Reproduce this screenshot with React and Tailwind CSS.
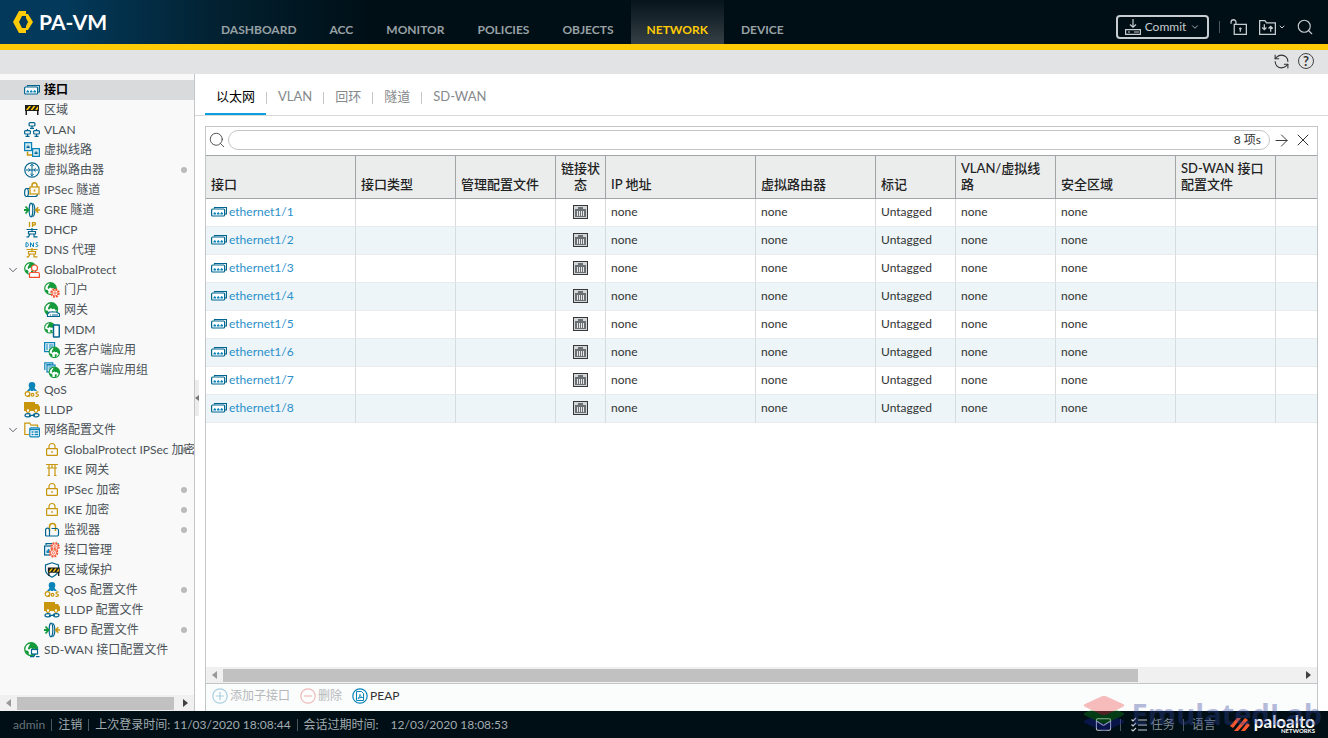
import React, { useState } from 'react';
import { ArrowRight, ChevronDown, ChevronRight, Search, X, Mail, RefreshCcw } from 'lucide-react';

const TEAL = '#00668f';
const BLUE = '#0a84b8';
const GOLD = '#c8960c';
const GREEN = '#149a3a';
const RED = '#f2502c';

const Icon = ({ children, className = 'size-4' }) => (
    <svg viewBox="0 0 16 16" fill="none" strokeWidth="1.2" className={`${className} shrink-0`} aria-hidden="true">
        {children}
    </svg>
);

/* --- Shared shapes --- */
const Globe = ({ x = 0, y = 0, s = 1 }) => (
    <g transform={`translate(${x} ${y}) scale(${s})`}>
        <circle cx="6.500" cy="6.500" r="5.800" fill="#fff" stroke={GREEN} />
        <path d="M6 1h3l2.500 2.500.8 3-1.500 1.500-1.500-2-1.500.5-1.500-1L4.500 7 3.500 6l.8-2Z" fill={GREEN} />
        <path d="M1 7.500 3.500 8l1 1.500-.5 2.300L2 10ZM7 8.500l2.500.5-1 2.500-1.500.5Z" fill={GREEN} />
    </g>
);

const Port = () => (
    <>
        <path d="M3.500 4.500v-1h12v6.500h-1.500" stroke={TEAL} />
        <rect x=".6" y="5" width="13" height="7" rx="1" stroke={TEAL} fill="#fff" />
        <path d="M2.500 10.500V9h.8V8h1v1h.8v1.500ZM6 10.500V9h.7V8h1v1h.8v1.500ZM9.400 10.500V9h.8V8h1v1h.8v1.500Z" fill={BLUE} />
    </>
);

const Barrier = () => (
    <>
        <path d="M1 3h14v6H1zM1.500 9H3v4H1.500zM13 9h1.500v4H13z" fill="#1c1c1c" />
        <path d="M2 8 5 4h2L4 8ZM6.500 8l3-4h2l-3 4ZM11 8l3-4v3l-1 1Z" fill="#ffcb06" />
    </>
);

const Lock = () => (
    <>
        <rect x="2.600" y="6.600" width="10.800" height="6.800" rx=".6" stroke={GOLD} />
        <path d="M5 6.500V4.500a3 3 0 0 1 6 0v2M8 9v2" stroke={GOLD} />
    </>
);

const Tunnel = () => (
    <>
        <ellipse cx="7" cy="8" rx="1.800" ry="6.800" stroke={TEAL} />
        <path d="M8.500 1.300c1.700.8 2.300 4 2.300 6.700s-.6 5.900-2.300 6.700" stroke={TEAL} />
        <path d="M0 8h4M1.500 4.500 4.600 8l-3.100 3.500" stroke={GREEN} strokeWidth="1.800" />
        <path d="M16 8h-4M14.300 5.200 11.700 8l2.600 2.800" stroke={GOLD} strokeWidth="1.500" />
    </>
);

const Figure = ({ color }) => (
    <path d="M2.500 7.500h11M8 6v4M4.500 9.500h7v2.500h-7zM6 12l-1.500 2.800h-2M10 12v2.800h3.500" stroke={color} />
);

const Gear = ({ x, y }) => (
    <g transform={`translate(${x} ${y})`}>
        <circle r="4" stroke={RED} strokeWidth="1.500" strokeDasharray="1.900 1.240" fill="#fff" />
        <circle r="3" stroke={RED} strokeWidth=".9" />
        <circle r="1.200" stroke={RED} strokeWidth=".8" />
    </g>
);

const Qos = () => (
    <>
        <path d="M8 0a3.300 3.300 0 0 1 3.300 3.300c0 1.500-.5 2-.8 2.700l2.500 3h-2.500L9.500 7.500V9h-3V7.500L5.500 9H3l2.500-3c-.3-.7-.8-1.200-.8-2.700A3.300 3.300 0 0 1 8 0Z" fill={BLUE} />
        <circle cx="3.500" cy="12" r="2.300" stroke={GOLD} />
        <path d="M4 13l1.500 2" stroke={GOLD} />
        <circle cx="8.500" cy="12.800" r="1.400" stroke={GOLD} />
        <path d="M14.500 10.300c-2-1-3.200.6-1.900 1.500 1.800.8 2.200 1.300 1.600 2-.7.800-1.800.600-2.700.100" stroke={GOLD} />
    </>
);

const Lldp = () => (
    <>
        <path d="M0 0h11v2h3l2 3v4H0Z" fill={GOLD} />
        <circle cx="4" cy="8.500" r="1.800" fill="#fff" stroke={GOLD} />
        <circle cx="12" cy="8.500" r="1.800" fill="#fff" stroke={GOLD} />
        <path d="M0 11h16v5H0z" fill="#f9f9f9" />
        <path d="M6.500 12.300c-1.200-1-5.500-1-5.500 1s4.300 2.200 5.800.5M9.500 14.300c1.200 1 5.500 1 5.500-1s-4.300-2.200-5.800-.5M5 13.300h6" stroke={TEAL} strokeWidth="1.300" />
    </>
);

const ICONS = {
    port: <Port />,
    barrier: <Barrier />,
    vlan: (
        <>
            <rect x="5.100" y=".6" width="5.800" height="3.400" rx="1" stroke={TEAL} />
            <rect x=".6" y="8.600" width="5.800" height="3.400" rx="1" stroke={TEAL} />
            <rect x="9.600" y="8.600" width="5.800" height="3.400" rx="1" stroke={TEAL} />
            <path d="M8 4v2.400M6 6.400h4M3.500 12v2.400M1.500 14.400h4M12.500 12v2.400M10.500 14.400h4M3.500 8.500V7M12.500 8.500V7" stroke={TEAL} />
        </>
    ),
    wire: (
        <>
            <path d="M3.500 9.500v3.500h5" stroke={GOLD} strokeWidth="1.500" />
            <rect x=".6" y=".6" width="7" height="8" stroke={BLUE} fill="#cde6f2" />
            <rect x="8.600" y="6.600" width="6.800" height="7.800" stroke={BLUE} fill="#cde6f2" />
            <path d="M2.500 6V4.500h1V3.500h1.200v1h1V6ZM10.500 12v-1.500h1v-1h1.200v1h1V12Z" fill={TEAL} />
        </>
    ),
    router: (
        <>
            <circle cx="8" cy="8" r="7.200" stroke={TEAL} />
            <path d="M8 2v12M2 8h12M6.300 4 8 2.300 9.700 4M6.300 12 8 13.700 9.700 12M4.500 6.300 6.200 8 4.500 9.700M11.500 6.300 9.800 8l1.700 1.700" stroke={TEAL} strokeWidth="1" />
        </>
    ),
    ipsec: (
        <>
            <path d="M2.500 6.500H6M2.500 14.500H11c2 0 2.500-1 2.500-2.500" stroke={TEAL} />
            <ellipse cx="2.500" cy="10.500" rx="1.900" ry="4" stroke={TEAL} />
            <rect x="6" y="5" width="9" height="7" stroke={GOLD} fill="#fdf9ec" />
            <path d="M8 5V3.300a2.500 2.500 0 0 1 5 0V5M10.500 7.500v2" stroke={GOLD} strokeWidth="1.500" />
        </>
    ),
    tunnel: <Tunnel />,
    dhcp: (
        <>
            <path d="M5.500 0v5M8.500 5V.6h1.800a1 1 0 0 1 0 2.400H8.500" stroke={GOLD} strokeWidth="1.300" />
            <Figure color={TEAL} />
        </>
    ),
    dns: (
        <>
            <path d="M2 .6v4.300c3.200 0 3.200-4.300 0-4.300ZM6.500 5V.6L9.500 5V.6M14 .8c-2.600-.8-2.600 1.600-1.200 1.900 2 .4 1.500 2.500-1.100 1.900" stroke={BLUE} strokeWidth="1" />
            <Figure color={GOLD} />
        </>
    ),
    globeUser: (
        <>
            <Globe />
            <circle cx="10.500" cy="6" r="3" fill="#fff" stroke={RED} />
            <path d="M5.500 15.400V12a1.500 1.500 0 0 1 1.500-1.500h7a1.500 1.500 0 0 1 1.400 1.500v3.400Z" fill="#fff" stroke={RED} />
        </>
    ),
    globeGear: (<><Globe /><Gear x={11} y={11} /></>),
    globeServer: (
        <>
            <Globe s={1.1} />
            <path d="M3.500 14.500v-2.500l2-2h7l3 2v2.500Z" fill="#fff" stroke={TEAL} />
            <path d="M6 13h1M8 13h6" stroke={TEAL} />
        </>
    ),
    globePhone: (
        <>
            <Globe s={0.9} />
            <rect x="9.500" y="3" width="5.800" height="12" rx=".5" fill="#fff" stroke={TEAL} strokeWidth="1.500" />
        </>
    ),
    listGlobe: (
        <>
            <rect x=".6" y=".6" width="10" height="9" fill="#e3f1f8" stroke={BLUE} />
            <path d="M2 3h2M5 3h4.500M2 5h2M5 5h4.500M2 7h2M5 7h3" stroke={BLUE} strokeWidth="1" />
            <Globe x={4.5} y={4.5} s={0.9} />
        </>
    ),
    listsGlobe: (
        <>
            <path d="M.8 8V.8h8V3" stroke={BLUE} />
            <rect x="3" y="3" width="8" height="7" fill="#e3f1f8" stroke={BLUE} />
            <path d="M2.500 2.500h5M4.500 5h5M4.500 7h4" stroke={BLUE} strokeWidth="1" />
            <Globe x={4.5} y={4.5} s={0.9} />
        </>
    ),
    qos: <Qos />,
    lldp: <Lldp />,
    folder: (
        <>
            <path d="M5 12.500H.8V1.200h5L7 3.200h6.500V5" stroke={GOLD} />
            <rect x="5.800" y="5.800" width="9.600" height="9" rx="1" fill="#fff" stroke={BLUE} />
            <path d="M6 7.500h9M7.500 10h2M10.500 10H14M7.500 12.500h2M10.500 12.500H14" stroke={BLUE} strokeWidth="1.300" />
        </>
    ),
    lock: <Lock />,
    gate: <path d="M2 2.500h12M3 6h10M5 2.500v11M11 2.500v11M8 2.500V6M3.500 13.500h2.500M10 13.500h2.500" stroke={GOLD} />,
    monitor: (
        <>
            <path d="M5.500 9V4.500a3 3 0 0 1 6 0V9" stroke={GOLD} strokeWidth="1.500" />
            <path d="M1.600 14V8a1.900 1.900 0 0 1 3.900 0v6M1.600 14h11.700c.8 0 1.200-.5 1.200-1.200V8.500a2 2 0 0 0-2-2H7.500" stroke={TEAL} />
        </>
    ),
    portGear: (
        <>
            <path d="M2 3V1.600h12V6" stroke={TEAL} />
            <rect x=".6" y="4" width="10" height="9" fill="#e3f1f8" stroke={TEAL} />
            <path d="M2.500 11V8.500h1.300V7h1.500v1.500h1.200V11Z" fill={BLUE} />
            <Gear x={11} y={4.8} />
            <Gear x={9.5} y={10.8} />
        </>
    ),
    shield: (
        <>
            <path d="M8 .8 1.500 3v5c0 3.500 3 5.500 6.500 7.200 3.500-1.700 6.500-3.700 6.500-7.200V3Z" stroke={TEAL} />
            <g transform="translate(3 3) scale(.85)"><Barrier /></g>
        </>
    ),
    sdwan: (
        <>
            <Globe s={1.1} />
            <rect x="7.500" y="7.500" width="6" height="4.500" fill="#fff" stroke={TEAL} />
            <path d="M10.500 12v2.500M6 14.700h4M12 14.700h3.500" stroke={TEAL} />
        </>
    ),
};

const TREE = [
    { icon: 'port', label: '接口', active: true },
    { icon: 'barrier', label: '区域' },
    { icon: 'vlan', label: 'VLAN' },
    { icon: 'wire', label: '虚拟线路' },
    { icon: 'router', label: '虚拟路由器', dot: true },
    { icon: 'ipsec', label: 'IPSec 隧道' },
    { icon: 'tunnel', label: 'GRE 隧道' },
    { icon: 'dhcp', label: 'DHCP' },
    { icon: 'dns', label: 'DNS 代理' },
    {
        icon: 'globeUser', label: 'GlobalProtect', children: [
            { icon: 'globeGear', label: '门户' },
            { icon: 'globeServer', label: '网关' },
            { icon: 'globePhone', label: 'MDM' },
            { icon: 'listGlobe', label: '无客户端应用' },
            { icon: 'listsGlobe', label: '无客户端应用组' },
        ],
    },
    { icon: 'qos', label: 'QoS' },
    { icon: 'lldp', label: 'LLDP' },
    {
        icon: 'folder', label: '网络配置文件', children: [
            { icon: 'lock', label: 'GlobalProtect IPSec 加密', dot: true },
            { icon: 'gate', label: 'IKE 网关' },
            { icon: 'lock', label: 'IPSec 加密', dot: true },
            { icon: 'lock', label: 'IKE 加密', dot: true },
            { icon: 'monitor', label: '监视器', dot: true },
            { icon: 'portGear', label: '接口管理' },
            { icon: 'shield', label: '区域保护' },
            { icon: 'qos', label: 'QoS 配置文件', dot: true },
            { icon: 'lldp', label: 'LLDP 配置文件' },
            { icon: 'tunnel', label: 'BFD 配置文件', dot: true },
        ],
    },
    { icon: 'sdwan', label: 'SD-WAN 接口配置文件' },
];

const NAV = ['DASHBOARD', 'ACC', 'MONITOR', 'POLICIES', 'OBJECTS', 'NETWORK', 'DEVICE'];
const TABS = ['以太网', 'VLAN', '回环', '隧道', 'SD-WAN'];

const COLUMNS = [
    { label: '接口', width: 'w-[150px]' },
    { label: '接口类型', width: 'w-[100px]' },
    { label: '管理配置文件', width: 'w-[100px]' },
    { label: '链接状态', width: 'w-[50px]', center: true },
    { label: 'IP 地址', width: 'w-[150px]' },
    { label: '虚拟路由器', width: 'w-[120px]' },
    { label: '标记', width: 'w-[80px]' },
    { label: 'VLAN/虚拟线路', width: 'w-[100px]' },
    { label: '安全区域', width: 'w-[120px]' },
    { label: 'SD-WAN 接口配置文件', width: 'w-[100px]' },
    { label: '', width: '' },
];

const INTERFACES = [1, 2, 3, 4, 5, 6, 7, 8].map(n => ({
    name: `ethernet1/${n}`, ip: 'none', router: 'none', tag: 'Untagged', vlan: 'none', zone: 'none',
}));

const TreeItem = ({ item, nested }) => {
    const [open, setOpen] = useState(true);
    return (
        <li>
            <div className={`relative flex h-5 items-center ${nested ? 'pl-11' : ''} ${item.active ? 'bg-[#d9dadb]' : ''}`}>
                {!nested && (
                    <span className="flex w-6 shrink-0 items-center pl-1.5">
                        {item.children && (
                            <button onClick={() => setOpen(!open)} aria-label={item.label}>
                                {open ? <ChevronDown size={14} strokeWidth={1.5} /> : <ChevronRight size={14} strokeWidth={1.5} />}
                            </button>
                        )}
                    </span>
                )}
                {item.dot && <span className="absolute right-[7px] size-1.5 rounded-full bg-[#b9babb]" />}
                <a href="#" className={`relative flex items-center gap-1 whitespace-nowrap ${item.active ? 'font-bold text-black' : ''}`}>
                    <Icon>{ICONS[item.icon]}</Icon>
                    {item.label}
                </a>
            </div>
            {item.children && open && (
                <ul>{item.children.map(child => <TreeItem key={child.label} item={child} nested />)}</ul>
            )}
        </li>
    );
};

const ScrollBar = ({ thumb }) => (
    <div className="flex h-4 shrink-0 items-center bg-[#f0f0f0] px-1.5">
        <span className="size-0 border-y-4 border-r-[5px] border-y-transparent border-r-[#999]" />
        <div className="mx-1.5 h-[13px] grow">
            <div className={`h-full bg-[#c1c1c1] ${thumb}`} />
        </div>
        <span className="size-0 border-y-4 border-l-[5px] border-y-transparent border-l-[#404040]" />
    </div>
);

const Header = () => (
    <header className="flex h-[50px] shrink-0 border-b-6 border-[#ffcb06] bg-[#000f16] bg-linear-to-r from-[#03395a] from-5% via-[#02202f] via-17% to-[#000f16] to-28%">
        <div className="flex w-[205px] shrink-0 items-center gap-1.5 pl-[13px] text-[21px] font-bold text-white">
            <svg width="20" height="22" viewBox="0 0 20 22" aria-hidden="true">
                <path d="M6 0h7v5H9L6 11l3 6h4v5H6L0 11ZM15 3l5 8-5 8h-2v-4l2-4-2-4V3Z" fill="#ffcb06" />
            </svg>
            PA-VM
        </div>
        <nav className="flex grow gap-px text-xs font-bold text-[#98a1a5]">
            {NAV.map(name => (
                <a
                    key={name}
                    href="#"
                    className={`flex items-center px-4 pt-4 ${name === 'NETWORK' ? 'bg-linear-to-b from-[#06141b] to-[#363f46] text-[#ffcb06]' : ''}`}
                >
                    {name}
                </a>
            ))}
        </nav>
        <div className="flex items-center gap-2.5 pt-2.5 pr-3.5 text-[#c6cccf]">
            <button className="flex h-6 w-[93px] items-center justify-center gap-1 rounded border-2 border-[#c6cccf] text-xs">
                <Icon>
                    <path d="M8 0v8M5 5.500 8 8.300l3-2.800M.6 10.600h14.800v4.800H.6zM3 13h2M9 13h5" stroke="currentColor" />
                </Icon>
                Commit
                <ChevronDown size={10} />
            </button>
            <span className="h-3 w-px bg-[#4c585e]" />
            <button aria-label="Locks">
                <Icon className="size-[17px]">
                    <path d="M1 4.500V3a2.300 2.300 0 0 1 4.600 0v2M4 5h11.400v9.400H4Z" stroke="currentColor" />
                    <path d="M9.700 8v4M8.500 9h2.500" stroke="currentColor" />
                </Icon>
            </button>
            <button aria-label="Config" className="ml-0.5 flex items-center gap-0.5">
                <Icon className="size-[17px]">
                    <path d="M.6 14.400V1.600h5l1.500 2h8.300v10.800ZM5 5v5M3 8l2 2 2-2M11 12V7M9 9l2-2 2 2" stroke="currentColor" />
                </Icon>
                <ChevronDown size={8} strokeWidth={3} />
            </button>
            <button aria-label="Search"><Search size={18} strokeWidth={1.5} /></button>
        </div>
    </header>
);

const Footer = () => (
    <footer className="flex h-[27px] shrink-0 items-center justify-between bg-[#000f16] px-[13px] text-xs text-[#a3abaf]">
        <div className="flex items-center gap-1.5">
            <span className="text-[#687379]">admin</span>
            <span className="h-3 w-px bg-[#4c585e]" />
            <a href="#">注销</a>
            <span className="h-3 w-px bg-[#4c585e]" />
            <span>上次登录时间: 11/03/2020 18:08:44</span>
            <span className="h-3 w-px bg-[#4c585e]" />
            <span>会话过期时间:</span>
            <span className="pl-1.5">12/03/2020 18:08:53</span>
        </div>
        <div className="flex items-center gap-2 text-[#7f898e]">
            <a href="#" aria-label="Mail" className="text-[#c6cccf]"><Mail size={17} strokeWidth={1.5} /></a>
            <span className="h-3 w-px bg-[#4c585e]" />
            <a href="#" className="flex items-center gap-1 pl-0.5">
                <Icon>
                    <path d="m.5 2.500 1.500 1.500L5 1M.5 7.500 2 9l3-3M.5 12.500 2 14l3-3M7 3h9M7 8h9M7 13h9" stroke="#c6cccf" />
                </Icon>
                任务
            </a>
            <span className="h-3 w-px bg-[#4c585e]" />
            <a href="#">语言</a>
            <div className="flex items-center gap-1 pl-1.5 text-white">
                <svg width="20" height="15" viewBox="0 0 20 15" fill="#fa582d" aria-hidden="true">
                    <path d="M0 9 7 1h4L3 11ZM4 14l11-13 3 2L8 14ZM11 14l6-8 3 2-5 6Z" />
                </svg>
                <div className="flex flex-col items-end">
                    <span className="text-[17px] leading-3 font-bold">paloalto</span>
                    <span className="text-[6px] leading-[6px] font-bold">NETWORKS</span>
                </div>
            </div>
        </div>
    </footer>
);

const Watermark = () => (
    <div className="pointer-events-none absolute right-1.5 bottom-1.5 flex items-center gap-1.5 opacity-35" aria-hidden="true">
        <svg width="44" height="36" viewBox="0 0 44 38">
            <path d="M1 26 22 17l21 9q1 2-2 3L26 36q-4 2-8 0L3 29q-3-1-2-3Z" fill="#1c1fa8" />
            <path d="M1 18 22 9l21 9q1 2-2 3L26 28q-4 2-8 0L3 21q-3-1-2-3Z" fill="#0a8f14" />
            <path d="M1 9 18 1q4-2 8 0l17 8q1 2-2 3L26 19q-4 2-8 0L3 12q-3-1-2-3Z" fill="#ee4444" />
        </svg>
        <span className="font-['Open_Sans',sans-serif] text-[29px] leading-8 font-bold text-[#33439b]">EmulatedLab</span>
    </div>
);

const InterfaceTable = () => (
    <table className="w-full table-fixed border-separate border-spacing-0 text-left">
        <thead>
            <tr className="h-11 bg-[#ebeded] text-[13px] leading-4 text-[#222]">
                {COLUMNS.map((col, i) => (
                    <th
                        key={i}
                        className={`${col.width} border-y border-r border-[#a0a5a8] px-[5px] pb-1.5 align-bottom font-medium last:border-r-0 ${col.center ? 'text-center' : ''}`}
                    >
                        {col.label}
                    </th>
                ))}
            </tr>
        </thead>
        <tbody>
            {INTERFACES.map(row => (
                <tr
                    key={row.name}
                    className="h-7 even:bg-[#edf5f8] [&>td]:border-r [&>td]:border-b [&>td]:border-r-[#d8dbdc] [&>td]:border-b-[#e8ebec] [&>td]:px-[5px] [&>td]:pb-0.5 [&>td:last-child]:border-r-0"
                >
                    <td>
                        <a href="#" className="flex items-center gap-0.5 text-[#2a8fc9]">
                            <Icon>{ICONS.port}</Icon>
                            {row.name}
                        </a>
                    </td>
                    <td />
                    <td />
                    <td>
                        <svg width="15" height="14" viewBox="0 0 15 14" className="mx-auto" role="img" aria-label="link">
                            <rect x=".5" y=".5" width="14" height="13" fill="#d4d6d8" stroke="#33373a" />
                            <path d="M2 12V4h3V2h5v2h3v8Z" fill="#6b7074" />
                            <path d="M4.500 6v5M6.500 6v5M8.500 6v5M10.500 6v5" stroke="#e8e8e8" />
                        </svg>
                    </td>
                    <td>{row.ip}</td>
                    <td>{row.router}</td>
                    <td>{row.tag}</td>
                    <td>{row.vlan}</td>
                    <td>{row.zone}</td>
                    <td />
                    <td />
                </tr>
            ))}
        </tbody>
    </table>
);

const App = () => {
    const [tab, setTab] = useState('以太网');
    const [query, setQuery] = useState('');

    return (
        <div className="relative flex h-screen flex-col overflow-hidden bg-white font-[Lato,'Noto_Sans_CJK_SC',sans-serif] text-xs text-[#333]">
            <Header />

            <div className="flex h-6 shrink-0 items-center justify-end gap-2 bg-[#e1e3e5] pr-3.5 pb-0.5 text-[#333]">
                <button aria-label="Refresh"><RefreshCcw size={17} strokeWidth={1.5} /></button>
                <button aria-label="Help" className="flex size-4 items-center justify-center rounded-full border border-[#444] text-[13px] leading-none font-bold">?</button>
            </div>

            <div className="flex min-h-0 grow">
                {/* Sidebar */}
                <aside className="relative flex w-[195px] shrink-0 flex-col border-r border-[#c3c6c8] bg-[#f9f9f9] text-[#4a5157]">
                    <ul className="min-h-0 grow overflow-hidden pt-1.5">
                        {TREE.map(item => <TreeItem key={item.label} item={item} />)}
                    </ul>
                    <ScrollBar thumb="w-[98%]" />
                    <button aria-label="Collapse" className="absolute top-[306px] -right-[5px] flex h-9 w-1 items-center bg-[#ececec]">
                        <span className="size-0 border-y-3 border-r-4 border-y-transparent border-r-[#777]" />
                    </button>
                </aside>

                <main className="flex min-w-0 grow flex-col">
                    {/* Tabs */}
                    <div className="flex h-[42px] shrink-0 items-stretch border-b border-[#d5d7d8] pl-2.5 text-[13px] text-[#85898c]">
                        {TABS.map((name, i) => (
                            <React.Fragment key={name}>
                                {i > 0 && <span className="mt-[18px] h-3 w-px bg-[#c3c6c8]" />}
                                <button
                                    onClick={() => setTab(name)}
                                    className={`border-b-2 px-[11px] pt-1.5 ${tab === name ? 'border-[#0aa0e0] text-black' : 'border-transparent'}`}
                                >
                                    {name}
                                </button>
                            </React.Fragment>
                        ))}
                    </div>

                    <section className="mt-2.5 mr-2.5 ml-2.5 flex min-h-0 grow flex-col border border-b-0 border-[#c3c6c8]">
                        <div className="flex h-7 shrink-0 items-center gap-0.5 px-0.5 pb-0.5">
                            <label htmlFor="filter" aria-label="Filter"><Search size={18} strokeWidth={1.2} className="text-[#444]" /></label>
                            <div className="flex h-5 grow items-center rounded-full border border-[#c3c6c8] px-2">
                                <input id="filter" value={query} onChange={e => setQuery(e.target.value)} className="min-w-0 grow outline-none" />
                                <span>8 项s</span>
                            </div>
                            <button aria-label="Apply"><ArrowRight size={19} strokeWidth={1.2} /></button>
                            <button aria-label="Clear" className="pr-0.5"><X size={20} strokeWidth={1.2} /></button>
                        </div>
                        <div className="min-h-0 grow overflow-hidden">
                            <InterfaceTable />
                        </div>
                        <ScrollBar thumb="w-[85%]" />
                        <div className="flex h-7 shrink-0 items-center gap-2.5 border-t border-[#c3c6c8] bg-[#fbfcfc] pb-1 pl-1.5">
                            <button disabled className="flex items-center gap-0.5 text-[#b5b8ba]">
                                <Icon><circle cx="8" cy="8" r="7.200" stroke="#a9cfe0" /><path d="M8 4v8M4 8h8" stroke="#a9cfe0" /></Icon>
                                添加子接口
                            </button>
                            <button disabled className="flex items-center gap-0.5 text-[#b5b8ba]">
                                <Icon><circle cx="8" cy="8" r="7.200" stroke="#f0b8b8" /><path d="M4 8h8" stroke="#f0b8b8" /></Icon>
                                删除
                            </button>
                            <button className="flex items-center gap-0.5">
                                <Icon>
                                    <circle cx="8" cy="8" r="7.200" stroke={BLUE} />
                                    <path d="M4.500 3.500h5l2 2v7h-7ZM6 10.500c1-1 2-2.500 2-4 0 1.500 1 2.500 2.500 3-2 0-3 .2-4.500 1Z" stroke={BLUE} strokeWidth="1" />
                                </Icon>
                                PEAP
                            </button>
                        </div>
                    </section>
                </main>
            </div>

            <Footer />
            <Watermark />
        </div>
    );
};

export default App;
